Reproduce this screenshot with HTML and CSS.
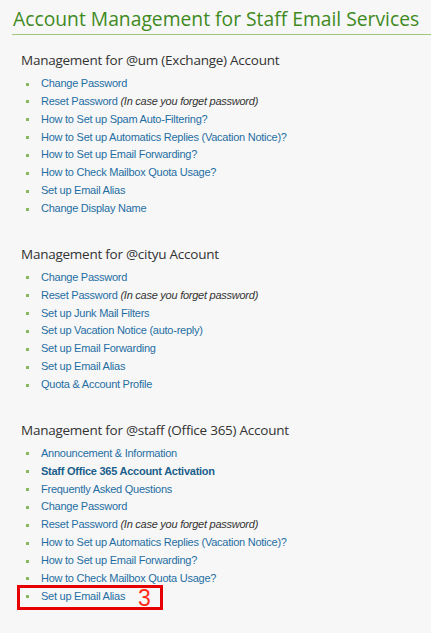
FILE: index.html
```html
<!DOCTYPE html>
<html>
<head>
<meta charset="utf-8">
<link rel="stylesheet" href="styles.css">
</head>
<body>
<div class="page">
  <h1 class="title">Account Management for Staff Email Services</h1>

  <section class="group">
    <h2 class="heading">Management for @um (Exchange) Account</h2>
    <ul class="links">
      <li><a>Change Password</a></li>
      <li><a>Reset Password</a> <em>(In case you forget password)</em></li>
      <li><a>How to Set up Spam Auto-Filtering?</a></li>
      <li><a>How to Set up Automatics Replies (Vacation Notice)?</a></li>
      <li><a>How to Set up Email Forwarding?</a></li>
      <li><a>How to Check Mailbox Quota Usage?</a></li>
      <li><a>Set up Email Alias</a></li>
      <li><a>Change Display Name</a></li>
    </ul>
  </section>

  <section class="group">
    <h2 class="heading">Management for @cityu Account</h2>
    <ul class="links">
      <li><a>Change Password</a></li>
      <li><a>Reset Password</a> <em>(In case you forget password)</em></li>
      <li><a>Set up Junk Mail Filters</a></li>
      <li><a>Set up Vacation Notice (auto-reply)</a></li>
      <li><a>Set up Email Forwarding</a></li>
      <li><a>Set up Email Alias</a></li>
      <li><a>Quota &amp; Account Profile</a></li>
    </ul>
  </section>

  <section class="group">
    <h2 class="heading">Management for @staff (Office 365) Account</h2>
    <ul class="links">
      <li><a>Announcement &amp; Information</a></li>
      <li><a class="strong">Staff Office 365 Account Activation</a></li>
      <li><a>Frequently Asked Questions</a></li>
      <li><a>Change Password</a></li>
      <li><a>Reset Password</a> <em>(In case you forget password)</em></li>
      <li><a>How to Set up Automatics Replies (Vacation Notice)?</a></li>
      <li><a>How to Set up Email Forwarding?</a></li>
      <li><a>How to Check Mailbox Quota Usage?</a></li>
      <li class="marked"><a>Set up Email Alias</a><span class="mark-box"><span class="mark-num">3</span></span></li>
    </ul>
  </section>
</div>
</body>
</html>
```

FILE: styles.css
```css
html, body {
  margin: 0;
  padding: 0;
  background: #f7f7f7;
}
body {
  min-height: 633px;
}
.page {
  padding: 6px 0 30px 12px;
}
.title {
  margin: 0;
  padding: 0 0 2px 1px;
  font-family: "Open Sans", sans-serif;
  font-weight: 400;
  font-size: 19.3px;
  line-height: 26px;
  color: #3f8a1e;
  border-bottom: 1px solid #a3c77a;
  white-space: nowrap;
}
.group {
  padding-left: 9px;
  margin-top: 15px;
}
.group + .group {
  margin-top: 26px;
}
.heading {
  margin: 0;
  font-family: "Open Sans", sans-serif;
  font-weight: 400;
  font-size: 13.5px;
  letter-spacing: -0.25px;
  line-height: 20px;
  color: #333;
}
.links {
  list-style: none;
  margin: 5px 0 0 0;
  padding: 0;
  font-family: "Liberation Sans", Arial, sans-serif;
  font-size: 11px;
  letter-spacing: -0.25px;
  line-height: 17.86px;
}
.links li {
  position: relative;
  padding-left: 20px;
  color: #333;
}
.links li::before {
  content: "";
  position: absolute;
  left: 5px;
  top: 7.5px;
  width: 3px;
  height: 3px;
  border-radius: 0.5px;
  background: #86b65a;
}
.links a {
  color: #1f6ea3;
}
.links a.strong {
  font-weight: 700;
  color: #1b5f8c;
}
.links em {
  font-style: italic;
  color: #333;
}
.mark-box {
  position: absolute;
  left: -4px;
  top: -3px;
  bottom: -4px;
  width: 140px;
  border: 3px solid #e60000;
}
.mark-num {
  position: absolute;
  left: 118px;
  top: -1px;
  font-family: "Liberation Sans", Arial, sans-serif;
  font-size: 23px;
  letter-spacing: 0;
  line-height: 23px;
  color: #ff2a1a;
}
```
